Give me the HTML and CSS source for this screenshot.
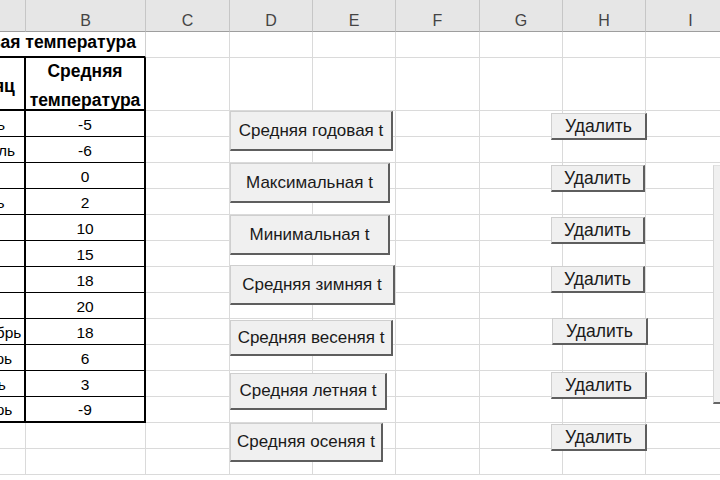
FILE: index.html
```html
<!DOCTYPE html>
<html lang="ru">
<head>
<meta charset="utf-8">
<link rel="stylesheet" href="styles.css">
</head>
<body>
<div class="sheet">
  <div class="grid">
    <div class="ch">A</div><div class="ch">B</div><div class="ch">C</div><div class="ch">D</div><div class="ch">E</div><div class="ch">F</div><div class="ch">G</div><div class="ch">H</div><div class="ch last">I</div>

    <div class="c title">Среднегодовая температура</div><div class="c"></div><div class="c"></div><div class="c"></div><div class="c"></div><div class="c"></div><div class="c"></div><div class="c"></div>

    <div class="c t ta th">Месяц</div><div class="c t tb th">Средняя<br>температура</div><div class="c"></div><div class="c"></div><div class="c"></div><div class="c"></div><div class="c"></div><div class="c"></div><div class="c"></div>

    <div class="c t ta m">Январь</div><div class="c t tb n">-5</div><div class="c"></div><div class="c"></div><div class="c"></div><div class="c"></div><div class="c"></div><div class="c"></div><div class="c"></div>
    <div class="c t ta m">Февраль</div><div class="c t tb n">-6</div><div class="c"></div><div class="c"></div><div class="c"></div><div class="c"></div><div class="c"></div><div class="c"></div><div class="c"></div>
    <div class="c t ta m">Март</div><div class="c t tb n">0</div><div class="c"></div><div class="c"></div><div class="c"></div><div class="c"></div><div class="c"></div><div class="c"></div><div class="c"></div>
    <div class="c t ta m">Апрель</div><div class="c t tb n">2</div><div class="c"></div><div class="c"></div><div class="c"></div><div class="c"></div><div class="c"></div><div class="c"></div><div class="c"></div>
    <div class="c t ta m">Май</div><div class="c t tb n">10</div><div class="c"></div><div class="c"></div><div class="c"></div><div class="c"></div><div class="c"></div><div class="c"></div><div class="c"></div>
    <div class="c t ta m">Июнь</div><div class="c t tb n">15</div><div class="c"></div><div class="c"></div><div class="c"></div><div class="c"></div><div class="c"></div><div class="c"></div><div class="c"></div>
    <div class="c t ta m">Июль</div><div class="c t tb n">18</div><div class="c"></div><div class="c"></div><div class="c"></div><div class="c"></div><div class="c"></div><div class="c"></div><div class="c"></div>
    <div class="c t ta m">Август</div><div class="c t tb n">20</div><div class="c"></div><div class="c"></div><div class="c"></div><div class="c"></div><div class="c"></div><div class="c"></div><div class="c"></div>
    <div class="c t ta m">Сентябрь</div><div class="c t tb n">18</div><div class="c"></div><div class="c"></div><div class="c"></div><div class="c"></div><div class="c"></div><div class="c"></div><div class="c"></div>
    <div class="c t ta m">Октябрь</div><div class="c t tb n">6</div><div class="c"></div><div class="c"></div><div class="c"></div><div class="c"></div><div class="c"></div><div class="c"></div><div class="c"></div>
    <div class="c t ta m">Ноябрь</div><div class="c t tb n">3</div><div class="c"></div><div class="c"></div><div class="c"></div><div class="c"></div><div class="c"></div><div class="c"></div><div class="c"></div>
    <div class="c t ta m lastrow">Декабрь</div><div class="c t tb n lastrow">-9</div><div class="c"></div><div class="c"></div><div class="c"></div><div class="c"></div><div class="c"></div><div class="c"></div><div class="c"></div>

    <div class="c"></div><div class="c"></div><div class="c"></div><div class="c"></div><div class="c"></div><div class="c"></div><div class="c"></div><div class="c"></div><div class="c"></div>
    <div class="c"></div><div class="c"></div><div class="c"></div><div class="c"></div><div class="c"></div><div class="c"></div><div class="c"></div><div class="c"></div><div class="c"></div>
  </div>

  <button class="btn calc b1">Средняя годовая t</button>
  <button class="btn calc b2">Максимальная t</button>
  <button class="btn calc b3">Минимальная t</button>
  <button class="btn calc b4">Средняя зимняя t</button>
  <button class="btn calc b5">Средняя весеняя t</button>
  <button class="btn calc b6">Средняя летняя t</button>
  <button class="btn calc b7">Средняя осеняя t</button>

  <button class="btn del d1">Удалить</button>
  <button class="btn del d2">Удалить</button>
  <button class="btn del d3">Удалить</button>
  <button class="btn del d4">Удалить</button>
  <button class="btn del d5">Удалить</button>
  <button class="btn del d6">Удалить</button>
  <button class="btn del d7">Удалить</button>

  <div class="edge-obj"></div>
</div>
</body>
</html>
```

FILE: styles.css
```css
html, body {
  margin: 0;
  padding: 0;
  background: #ffffff;
}

.sheet {
  position: relative;
  width: 720px;
  height: 480px;
  overflow: hidden;
  font-family: "Liberation Sans", Arial, sans-serif;
  color: #000;
}

.grid {
  display: grid;
  margin-left: -49px;
  grid-template-columns: 75px 120px 84px 83px 83px 84px 83px 83px 90px;
  grid-template-rows: 32px 26px 53px repeat(14, 26px);
}

.ch {
  box-sizing: border-box;
  background: #e6e6e6;
  border-right: 1px solid #c6c6c6;
  border-bottom: 1px solid #9e9e9e;
  display: flex;
  align-items: center;
  justify-content: center;
  padding-top: 10px;
  font-size: 16px;
  color: #444;
}

.c {
  box-sizing: border-box;
  border-right: 1px solid #dadada;
  border-bottom: 1px solid #dadada;
  display: flex;
  align-items: flex-end;
  justify-content: center;
  font-size: 15.5px;
  white-space: nowrap;
  min-width: 0;
}

.title {
  grid-column: span 2;
  justify-content: flex-end;
  padding-right: 9px;
  padding-bottom: 3px;
  font-weight: bold;
  font-size: 17.5px;
  border-bottom: 2px solid #000;
  border-right-color: #d0d0d0;
}

.t {
  border-bottom: 1px solid #000;
}

.ta {
  border-right: 2px solid #000;
  overflow: hidden;
}

.tb {
  border-right: 2px solid #000;
}

.th {
  font-weight: bold;
  font-size: 17.5px;
  text-align: center;
  align-items: center;
  line-height: 29px;
  border-bottom: 2px solid #000;
  padding-top: 5px;
}

.m {
  justify-content: flex-start;
  padding-left: 1px;
  padding-bottom: 2px;
}

.n {
  padding-bottom: 2px;
}

.lastrow {
  border-bottom: 2px solid #000;
}

.btn {
  position: absolute;
  box-sizing: border-box;
  margin: 0;
  padding: 0;
  background: #f0f0f0;
  border-top: 1px solid #cfcfcf;
  border-left: 1px solid #cfcfcf;
  border-right: 2px solid #5e5e5e;
  border-bottom: 2px solid #5e5e5e;
  font-family: "Liberation Sans", Arial, sans-serif;
  font-size: 17px;
  color: #1a1a1a;
  white-space: nowrap;
  display: flex;
  align-items: center;
  justify-content: center;
}

.calc { left: 230px; }
.b1 { top: 111px; width: 163px; height: 40px; }
.b2 { top: 163px; width: 160px; height: 40px; }
.b3 { top: 215px; width: 160px; height: 40px; }
.b4 { top: 265px; width: 165px; height: 40px; }
.b5 { top: 320px; width: 163px; height: 36px; }
.b6 { top: 373px; width: 157px; height: 37px; }
.b7 { top: 423px; width: 153px; height: 39px; }

.del { left: 551px; width: 96px; height: 27px; font-size: 17.5px; }
.d1 { top: 113px; }
.d2 { top: 165px; width: 94px; }
.d3 { top: 217px; width: 94px; }
.d4 { top: 266px; width: 94px; }
.d5 { top: 318px; left: 552px; }
.d6 { top: 372px; }
.d7 { top: 424px; }

.edge-obj {
  position: absolute;
  left: 713px;
  top: 165px;
  width: 12px;
  height: 239px;
  box-sizing: border-box;
  background: #f0f0f0;
  border-left: 1px solid #d6d6d6;
  border-top: 1px solid #e2e2e2;
  border-bottom: 2px solid #666;
}
```
